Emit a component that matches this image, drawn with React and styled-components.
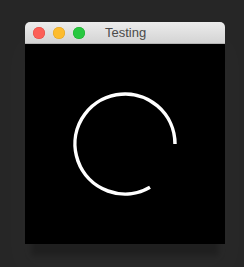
import React from "react";
import styled, { createGlobalStyle } from "styled-components";

const GlobalStyle = createGlobalStyle`
  html, body {
    margin: 0;
    padding: 0;
    background: #262626;
  }
`;

const Desktop = styled.div`
  width: 244px;
  height: 267px;
  background: #262626;
  padding: 22px 0 0 25px;
  box-sizing: border-box;
  overflow: hidden;
`;

const Window = styled.div`
  width: 200px;
  display: flex;
  flex-direction: column;
  border-radius: 5px 5px 0 0;
  box-shadow: 0 18px 6px -6px rgba(0, 0, 0, 0.22),
    0 22px 36px 14px rgba(255, 255, 255, 0.014);
`;

const TitleBar = styled.div`
  height: 22px;
  display: flex;
  align-items: center;
  padding-left: 8px;
  gap: 8px;
  background: linear-gradient(#ececec, #d4d4d4);
  border-radius: 5px 5px 0 0;
  border-bottom: 1px solid #b4b4b4;
  box-sizing: border-box;
  position: relative;
`;

const Light = styled.span`
  width: 12px;
  height: 12px;
  border-radius: 50%;
  background: ${(p) => p.color};
  box-shadow: inset 0 0 0 0.5px ${(p) => p.edge};
`;

const Title = styled.span`
  position: absolute;
  left: 80px;
  top: 3px;
  font-family: "Liberation Sans", Arial, sans-serif;
  font-size: 13px;
  color: #4b4b4b;
`;

const Body = styled.div`
  height: 200px;
  background: #000;
  display: flex;
`;

const App = () => (
  <>
    <GlobalStyle />
    <Desktop>
      <Window>
        <TitleBar>
          <Light color="#fc5f57" edge="#de4a41" />
          <Light color="#fdbc2e" edge="#dea123" />
          <Light color="#28c840" edge="#1aab29" />
          <Title>Testing</Title>
        </TitleBar>
        <Body>
          <svg width="200" height="200" viewBox="0 0 200 200">
            <path
              d="M150 100 A50 50 0 1 0 125 143.3"
              fill="none"
              stroke="#fff"
              strokeWidth="3.5"
            />
          </svg>
        </Body>
      </Window>
    </Desktop>
  </>
);

export default App;
